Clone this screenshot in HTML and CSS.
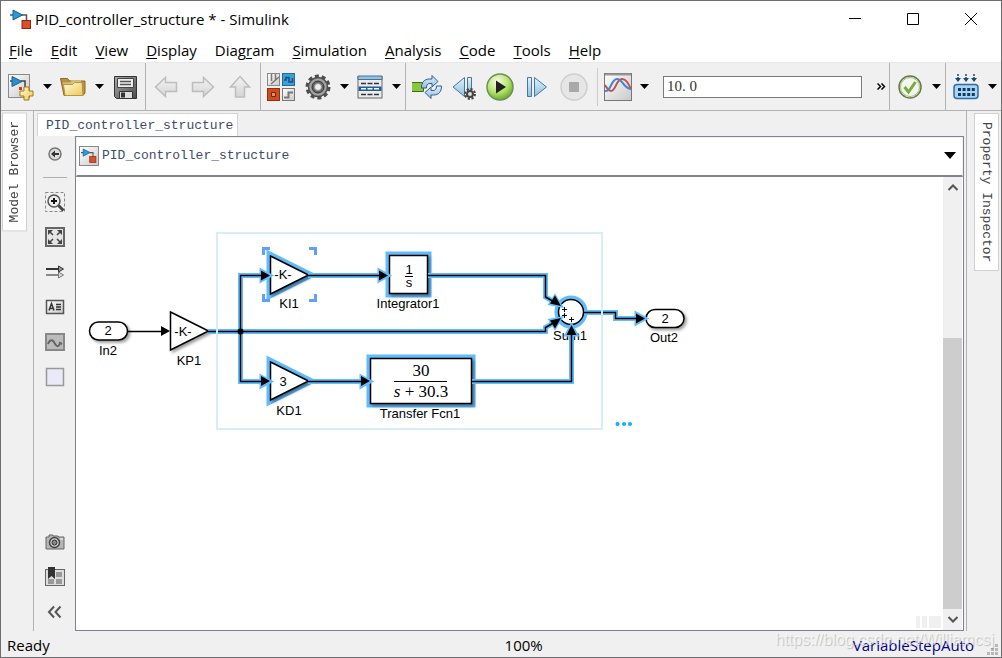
FILE: index.html
```
<!DOCTYPE html>
<html lang="en">
<head>
  <meta charset="UTF-8" />
  <meta name="viewport" content="width=device-width, initial-scale=1.0" />
  <title>PID_controller_structure * - Simulink</title>
  <link rel="stylesheet" href="styles.css">
</head>
<body>
  <!-- shared gradients and symbols -->
  <svg class="defs" width="0" height="0" aria-hidden="true">
    <defs>
      <linearGradient id="paper" x1="0" y1="0" x2="1" y2="1"><stop offset="0" stop-color="#fff"/><stop offset="1" stop-color="#c9c9c9"/></linearGradient>
      <linearGradient id="blue" x1="0" y1="0" x2="0" y2="1"><stop offset="0" stop-color="#e4f1fb"/><stop offset="1" stop-color="#8fbfe0"/></linearGradient>
      <linearGradient id="gold" x1="0" y1="0" x2="1" y2="1"><stop offset="0" stop-color="#fffbe0"/><stop offset="1" stop-color="#ecc94e"/></linearGradient>
      <linearGradient id="metal" x1="0" y1="0" x2="1" y2="1"><stop offset="0" stop-color="#aaa"/><stop offset="1" stop-color="#4c4c4c"/></linearGradient>
      <linearGradient id="pale" x1="0" y1="0" x2="0" y2="1"><stop offset="0" stop-color="#f4f4f4"/><stop offset="1" stop-color="#d4d4d4"/></linearGradient>
      <radialGradient id="green" cx="0.4" cy="0.3" r="0.7"><stop offset="0" stop-color="#f7fde9"/><stop offset="0.6" stop-color="#b5e36c"/><stop offset="1" stop-color="#69ae2c"/></radialGradient>
      <symbol id="model" viewBox="0 0 22 20">
        <path d="M0 6h3M12 6h4.500v7" fill="none" stroke="#555" stroke-width="1.500"/>
        <path d="M3 1l9.500 5L3 11z" fill="#2b9bd8" stroke="#17608f"/>
        <rect x="12" y="11.500" width="8.500" height="8" fill="#d9502a" stroke="#8f2a12"/>
      </symbol>
      <symbol id="caret" viewBox="0 0 9 5"><path d="M0 0h9L4.500 5z"/></symbol>
    </defs>
  </svg>

  <div class="window">
    <header class="titlebar">
      <svg class="app-icon" width="22" height="20"><use href="#model"/></svg>
      <h1>PID_controller_structure * - Simulink</h1>
      <div class="window-buttons">
        <button aria-label="Minimize"><svg width="12" height="12"><path d="M0 5.500h12" stroke="#000"/></svg></button>
        <button aria-label="Maximize"><svg width="12" height="12"><path d="M.5.5h11v11H.5z" fill="none" stroke="#000"/></svg></button>
        <button aria-label="Close"><svg width="12" height="12"><path d="M0 0l12 12M12 0L0 12" stroke="#000"/></svg></button>
      </div>
    </header>

    <nav class="menubar">
      <button><u>F</u>ile</button>
      <button><u>E</u>dit</button>
      <button><u>V</u>iew</button>
      <button><u>D</u>isplay</button>
      <button>Diag<u>r</u>am</button>
      <button><u>S</u>imulation</button>
      <button><u>A</u>nalysis</button>
      <button><u>C</u>ode</button>
      <button><u>T</u>ools</button>
      <button><u>H</u>elp</button>
    </nav>

    <div class="toolbar">
      <div class="group">
        <div class="split">
          <button aria-label="New model"><svg width="28" height="28">
            <rect x="1.500" y="1.500" width="21" height="23" fill="url(#paper)" stroke="#8a8a8a"/>
            <path d="M3 8h3M14 8h4v6" fill="none" stroke="#444" stroke-width="1.500"/>
            <path d="M5 3.500l10 5-10 5z" fill="#2b8fd0" stroke="#17608f"/>
            <path d="M12 14h3v3h-3z" fill="#c8401c"/>
            <path d="M17 14h5v4h4v5h-4v4h-5v-4h-4v-5h4z" fill="url(#gold)" stroke="#a87a12"/>
          </svg></button>
          <button class="drop" aria-label="New options"><svg width="9" height="5"><use href="#caret"/></svg></button>
        </div>
        <div class="split">
          <button aria-label="Open"><svg width="28" height="28">
            <path d="M1.500 5.500h7l2 2.500h15.500v12l-2 2.500H5z" fill="#b98f4c" stroke="#8f6a25"/>
            <path d="M4 9.500h7l2-2h9V20H6z" fill="#e0bf74"/>
            <path d="M4.500 11.500h9l2-2h7.500l1 13H6z" fill="url(#gold)" stroke="#b5954a"/>
          </svg></button>
          <button class="drop" aria-label="Open options"><svg width="9" height="5"><use href="#caret"/></svg></button>
        </div>
        <button aria-label="Save"><svg width="28" height="28">
          <path d="M3.500 3.500h22v22h-20l-2-2z" fill="url(#metal)" stroke="#333"/>
          <path d="M6.500 5.500h16v9h-16z" fill="#eee" stroke="#444"/>
          <path d="M9 8.500h11M9 11.500h11" stroke="#555" stroke-width="1.500"/>
          <path d="M8.500 18.500h13v7h-13z" fill="#ddd" stroke="#333"/>
          <path d="M10 19.500h4v5h-4z" fill="#333"/>
        </svg></button>
      </div>

      <div class="group">
        <button aria-label="Back" disabled><svg width="28" height="28"><path d="M3.500 14l10-9.500v5h11v9h-11v5z" fill="url(#pale)" stroke="#bdbdbd" stroke-width="1.500"/></svg></button>
        <button aria-label="Forward" disabled><svg width="28" height="28"><path d="M24.500 14l-10-9.500v5h-11v9h11v5z" fill="url(#pale)" stroke="#bdbdbd" stroke-width="1.500"/></svg></button>
        <button aria-label="Up to parent" disabled><svg width="28" height="28"><path d="M14 3.500l9.500 10.500h-5v10h-9V14h-5z" fill="url(#pale)" stroke="#bdbdbd" stroke-width="1.500"/></svg></button>
      </div>

      <div class="group">
        <button aria-label="Library browser"><svg width="28" height="28">
          <rect x=".5" y=".5" width="12" height="12" fill="url(#paper)" stroke="#888"/>
          <path d="M4.500 1v7M4 11l8-7M8.500 1v6" stroke="#777" stroke-width="1.500"/>
          <rect x="15.500" y=".5" width="12" height="12" fill="#3c9fdb" stroke="#1d6ca3"/>
          <path d="M17 7h2V4.500h3V9h3.500V5" fill="none" stroke="#164f7c" stroke-width="1.500"/>
          <rect x=".5" y="15.500" width="12" height="12" fill="#cf4a1d" stroke="#93300e"/>
          <path d="M4.500 19.500h4v4h-4z" fill="#ec8c62" stroke="#7a1f07"/>
          <rect x="15.500" y="15.500" width="12" height="12" fill="url(#paper)" stroke="#777"/>
          <path d="M17 24.500h4.500v-5H26" fill="none" stroke="#777" stroke-width="2"/>
        </svg></button>
        <div class="split">
          <button aria-label="Model configuration"><svg width="28" height="28">
            <circle cx="14" cy="14" r="11" fill="none" stroke="#4d4d4d" stroke-width="3" stroke-dasharray="4 2.910"/>
            <circle cx="14" cy="14" r="9.500" fill="#a2a2a2" stroke="#4d4d4d" stroke-width="1.500"/>
            <circle cx="14" cy="14" r="6" fill="#666" stroke="#333"/>
            <circle cx="14" cy="14" r="3.500" fill="#eee" stroke="#999"/>
          </svg></button>
          <button class="drop" aria-label="Configuration options"><svg width="9" height="5"><use href="#caret"/></svg></button>
        </div>
        <div class="split">
          <button aria-label="Model explorer"><svg width="28" height="28">
            <rect x="2" y="3.500" width="24" height="21.500" fill="#ececec" stroke="#666"/>
            <path d="M2 3h24v3.500H2z" fill="#8fc3e8" stroke="#4c708e"/>
            <path d="M2.500 13.500h23v4.500h-23z" fill="#1f5f9c"/>
            <path d="M5 10.500h18M5 21.500h18" stroke="#333" stroke-width="1.500" stroke-dasharray="5 1.500"/>
            <path d="M5 15.750h18" stroke="#fff" stroke-width="1.500" stroke-dasharray="5 1.500"/>
          </svg></button>
          <button class="drop" aria-label="Explorer options"><svg width="9" height="5"><use href="#caret"/></svg></button>
        </div>
      </div>

      <div class="group grow">
        <button aria-label="Fast restart"><svg width="30" height="28">
          <path d="M-.5 9.500h12v9H-.5z" fill="#8cc63f" stroke="#3f6c17"/>
          <path d="M9.500 15c0-6 3-9 8-9h2.500V2.500l6 6-6 5.500v-3.500h-2c-2.500 0-3.500 1.500-3.500 4.500z" fill="url(#blue)" stroke="#2b5c8c"/>
          <path d="M29.500 13c0 6-3 9-8 9H19v3.500l-6-6 6-5.500v3.500h2c2.500 0 3.500-1.500 3.500-4.500z" fill="url(#blue)" stroke="#2b5c8c"/>
        </svg></button>
        <button aria-label="Step back"><svg width="28" height="28">
          <path d="M15.500 4.500v19L4 14z" fill="url(#blue)" stroke="#45789f"/>
          <path d="M18.500 4.500h4v16h-4z" fill="url(#blue)" stroke="#45789f"/>
          <circle cx="21" cy="21" r="5" fill="none" stroke="#444" stroke-width="2" stroke-dasharray="2.200 1.700"/>
          <circle cx="21" cy="21" r="3" fill="#ddd" stroke="#444" stroke-width="2"/>
        </svg></button>
        <button aria-label="Run"><svg width="28" height="28">
          <circle cx="14" cy="14" r="13" fill="url(#green)" stroke="#6f8f57" stroke-width="1.500"/>
          <path d="M10 7.500v13l10-6.500z" fill="#222"/>
        </svg></button>
        <button aria-label="Step forward"><svg width="28" height="28">
          <path d="M4.500 4.500h4v19h-4z" fill="url(#blue)" stroke="#45789f"/>
          <path d="M11.500 4.500v19l12-9.500z" fill="url(#blue)" stroke="#45789f"/>
        </svg></button>
        <button aria-label="Stop" disabled><svg width="28" height="28">
          <circle cx="14" cy="14" r="13" fill="#e6e6e6" stroke="#cfcfcf" stroke-width="1.500"/>
          <path d="M9 9h10v10H9z" fill="#a9a9a9"/>
        </svg></button>
        <span class="thin-line"></span>
        <div class="split">
          <button aria-label="Simulation data inspector"><svg width="28" height="28">
            <rect x=".5" y=".5" width="27" height="27" fill="url(#paper)" stroke="#777"/>
            <path d="M1 1.500h26" stroke="#999" stroke-width="2"/>
            <path d="M1 12c2 3 3 6 6 6 5 0 5-12 11-12 4 0 6 4 9 10" fill="none" stroke="#cc4b4b" stroke-width="2"/>
            <path d="M1 18c6 1 6-12 12-12 6 0 6 9 14 10" fill="none" stroke="#3f87cc" stroke-width="2"/>
          </svg></button>
          <button class="drop" aria-label="Inspector options"><svg width="9" height="5"><use href="#caret"/></svg></button>
        </div>
        <input class="stop-time" type="text" value="10. 0" aria-label="Simulation stop time">
        <button class="drop" aria-label="More tools"><svg width="9" height="7"><path d="M.5.5L3.500 3.500l-3 3M4.500.5l3 3-3 3" fill="none" stroke="#000" stroke-width="1.500"/></svg></button>
      </div>

      <div class="group">
        <div class="split">
          <button aria-label="Model advisor"><svg width="28" height="28">
            <circle cx="14" cy="14" r="11" fill="#f3f6ee" stroke="#68784f" stroke-width="1.500"/>
            <circle cx="14" cy="14" r="9.500" fill="none" stroke="#9ec070"/>
            <path d="M8.500 14l4 5 7-10" fill="none" stroke="#79ab3c" stroke-width="3"/>
          </svg></button>
          <button class="drop" aria-label="Advisor options"><svg width="9" height="5"><use href="#caret"/></svg></button>
        </div>
      </div>

      <div class="group">
        <div class="split">
          <button aria-label="Build model"><svg width="28" height="28">
            <path d="M6 1v6M14 1v6M22 1v6" stroke="#18486f" stroke-width="1.500" stroke-dasharray="2 1"/>
            <path d="M3 5h6L6 9zM11 5h6l-3 4zM19 5h6l-3 4z" fill="#18486f"/>
            <rect x="2" y="11.500" width="24" height="14" rx="3" fill="#a8d5f5" stroke="#2b6da3" stroke-width="1.500"/>
            <path d="M6 16.500h17M6 21.500h17" stroke="#143a5c" stroke-width="3" stroke-dasharray="3 1.600"/>
          </svg></button>
          <button class="drop" aria-label="Build options"><svg width="9" height="5"><use href="#caret"/></svg></button>
        </div>
      </div>
    </div>

    <main class="workspace">
      <aside class="dock dock-left"><button class="dock-tab flip">Model Browser</button></aside>

      <section class="editor">
        <div class="tabs"><button class="tab">PID_controller_structure</button></div>
        <div class="editor-body">
          <div class="palette">
            <button aria-label="Hide browser"><svg width="20" height="20"><circle cx="10" cy="10" r="6" fill="#ddd" stroke="#777" stroke-width="1.500"/><path d="M6 10l4-3.500v2.500h4v2h-4v2.500z" fill="#333"/></svg></button>
            <hr>
            <button aria-label="Zoom"><svg width="20" height="20"><path d="M.5.5h19v19H.5z" fill="none" stroke="#888" stroke-dasharray="3 2"/><circle cx="9" cy="9" r="6" fill="#eee" stroke="#555" stroke-width="1.500"/><path d="M6 9h6M9 6v6" stroke="#111" stroke-width="2"/><path d="M13.500 13.500l5 5" stroke="#444" stroke-width="3"/></svg></button>
            <button aria-label="Fit to view"><svg width="20" height="20"><rect x="1" y="1" width="18" height="18" fill="#e4e4e4" stroke="#666" stroke-width="2"/><path d="M3 3h5L3 8zM17 3h-5l5 5zM3 17h5l-5-5zM17 17h-5l5-5z" fill="#444"/><path d="M4 4l4 4M16 4l-4 4M4 16l4-4M16 16l-4-4" stroke="#444" stroke-width="1.500"/></svg></button>
            <button aria-label="Sample time display"><svg width="20" height="20"><path d="M1 7h13" stroke="#333" stroke-width="2"/><path d="M13.500 4l5 3-5 3z" fill="#999" stroke="#333"/><path d="M1 13h13" stroke="#888" stroke-width="2"/><path d="M13.500 10l5 3-5 3z" fill="#ddd" stroke="#777"/></svg></button>
            <button aria-label="Annotation"><svg width="20" height="20"><rect x="1.500" y="3.500" width="17" height="13" fill="url(#paper)" stroke="#555" stroke-width="1.500"/><path d="M4 13.500l2.500-7 2.500 7M4.500 11.500h4M11 7.500h5M11 10h5M11 12.500h5" fill="none" stroke="#333" stroke-width="1.500"/></svg></button>
            <button aria-label="Image"><svg width="20" height="20"><rect x="1" y="2" width="18" height="16" fill="#bbb" stroke="#888" stroke-width="2"/><path d="M3 12c2-5 5-5 7 0 2 3 4 3 5-1l2 1" fill="none" stroke="#666" stroke-width="2"/></svg></button>
            <button aria-label="Area"><svg width="20" height="20"><rect x="1.500" y="1.500" width="17" height="17" fill="#e9e9f8" stroke="#999" stroke-width="1.500"/></svg></button>
            <span class="spacer"></span>
            <button aria-label="Screenshot"><svg width="20" height="20"><path d="M1 5h3V3h4v1h5l1 1h5v12H1z" fill="#b5b5b5" stroke="#666"/><circle cx="9.500" cy="10.500" r="5" fill="#ccc" stroke="#444" stroke-width="1.500"/><circle cx="9.500" cy="10.500" r="2.500" fill="#888" stroke="#333"/><path d="M15 7h3" stroke="#fff"/></svg></button>
            <button aria-label="Viewmarks"><svg width="20" height="20"><rect x=".5" y="2.500" width="19" height="16" fill="#ddd" stroke="#666"/><path d="M11 5h6v5h-6zM11 12h6v5h-6zM3 12h6v5H3z" fill="#999"/><path d="M3 0h7v12l-3.500-3L3 12z" fill="#333"/></svg></button>
            <button aria-label="Collapse palette"><svg width="20" height="20"><path d="M9 4.500L4 10l5 5.500M15.500 4.500l-5 5.500 5 5.500" fill="none" stroke="#555" stroke-width="2"/></svg></button>
          </div>

          <div class="view">
            <div class="breadcrumb">
              <span class="crumb-icon"><svg width="16" height="15"><use href="#model"/></svg></span>
              <a href="#">PID_controller_structure</a>
              <button class="history" aria-label="Path history"><svg width="12" height="7" viewBox="0 0 12 7"><path d="M0 0h12L6 7z"/></svg></button>
            </div>
            <div class="canvas-row">
              <div class="canvas">
                <svg class="diagram" width="640" height="280" viewBox="76 177 640 280">
                  <defs>
                    <filter id="shadow" x="-30%" y="-30%" width="170%" height="170%"><feDropShadow dx="2" dy="2" stdDeviation="1.500" flood-color="#000" flood-opacity="0.4"/></filter>
                  </defs>
                  <text x="570" y="340">Sum1</text>

                  <!-- highlighted block outlines -->
                  <g class="halo">
                    <path d="M270.500 256v38l38-19zM270.500 362v38l38-19z"/>
                    <path d="M389.500 255.500h38v38h-38zM370.500 358.500h101v45h-101z"/>
                    <circle cx="571" cy="312" r="12.500"/>
                  </g>

                  <!-- blocks -->
                  <g class="block" filter="url(#shadow)">
                    <rect x="89.500" y="322" width="38" height="18" rx="9"/>
                    <path d="M170.500 312v38l38-19z"/>
                    <path d="M270.500 256v38l38-19z"/>
                    <path d="M270.500 362v38l38-19z"/>
                    <path d="M389.500 255.500h38v38h-38z"/>
                    <path d="M370.500 358.500h101v45h-101z"/>
                    <rect x="646" y="309.500" width="38" height="18" rx="9"/>
                  </g>
                  <circle class="block" cx="571" cy="312" r="12.500"/>

                  <!-- wires -->
                  <g class="wire-halo">
                    <path d="M208 331.500h337.500v-4l7-4M262 275.500h-21.500v106H262M308 275.500h73M428 275.500h117.500V297l7 4M308 381.500h54M472 381.500h99.500V334M584 312.500h31.500v6H638"/>
                  </g>
                  <g class="head-halo">
                    <path d="M261 270v11l10-5.500zM261 376v11l10-5.500zM379 270v11l10-5.500zM361 376v11l10-5.500zM636 313v11l10-5.500zM566 335h11l-5.500-10zM550 304l5-8 6 10zM550 320l5 8 6-10z"/>
                  </g>
                  <g class="wire">
                    <path d="M128 331.500h34M208 331.500h337.500v-4l7-4M262 275.500h-21.500v106H262M308 275.500h73M428 275.500h117.500V297l7 4M308 381.500h54M472 381.500h99.500V334M584 312.500h31.500v6H638"/>
                  </g>
                  <path d="M161 326v10l9-5zM261 270.500v10l9-5zM261 376v10l9-5zM379 270.500v10l9-5zM361 376v10l9-5zM636 313.500v10l9-5zM566.500 335h10l-5-10zM550 303.500l5-8 6 10.500zM550 320.500l5 8 6-10.500z"/>
                  <circle cx="240.500" cy="331.500" r="3"/>

                  <rect class="marquee" x="217" y="233" width="385" height="196"/>
                  <path class="handles" d="M263.500 255v-6.500h6.500M309 248.500h6.500v6.500M315.500 294v6.500H309M270 300.500h-6.500V294"/>

                  <text x="108" y="335">2</text>
                  <text x="108" y="355">In2</text>
                  <text x="183" y="336">-K-</text>
                  <text x="189" y="365">KP1</text>
                  <text x="283" y="279">-K-</text>
                  <text x="289" y="308">KI1</text>
                  <text x="283" y="386">3</text>
                  <text x="289" y="415">KD1</text>
                  <text x="409" y="274">1</text>
                  <path d="M405 276.500h8" stroke="#000"/>
                  <text x="409" y="287">s</text>
                  <text x="408" y="308">Integrator1</text>
                  <text class="math" x="421" y="376">30</text>
                  <path d="M394 381.500h53" stroke="#000"/>
                  <text class="math" x="421" y="397"><tspan font-style="italic">s</tspan> + 30.3</text>
                  <text x="420" y="418">Transfer Fcn1</text>
                  <path d="M562 309.500h5M564.500 307v5M562 315.500h5M564.500 313v5M569 319.500h5M571.500 317v5" stroke="#000"/>
                  <text x="665" y="323">2</text>
                  <text x="664" y="342">Out2</text>
                  <g fill="#0ab1f5"><circle cx="617.500" cy="424" r="2"/><circle cx="624" cy="424" r="2"/><circle cx="630" cy="424" r="2"/></g>
                </svg>
                <svg class="blocks-mark" width="26" height="12"><path d="M0 0h4v12H0zM6 0h5v12H6zM13 0h12v12H13z" fill="#f0f0f0"/></svg>
              </div>
              <div class="scrollbar">
                <button aria-label="Scroll up"><svg width="10" height="7"><path d="M.5 6L5 1.500 9.500 6" fill="none" stroke="#555" stroke-width="2"/></svg></button>
                <span class="track"><span class="thumb"></span></span>
                <button aria-label="Scroll down"><svg width="10" height="7"><path d="M.5 1L5 5.500 9.500 1" fill="none" stroke="#555" stroke-width="2"/></svg></button>
              </div>
            </div>
          </div>
        </div>
      </section>

      <aside class="dock dock-right"><button class="dock-tab">Property Inspector</button></aside>
    </main>

    <footer class="statusbar">
      <span>Ready</span>
      <span>100%</span>
      <a href="#">VariableStepAuto</a>
      <svg class="grip" width="11" height="11"><path d="M8 0h3v3H8zM4 4h3v3H4zM8 4h3v3H8zM0 8h3v3H0zM4 8h3v3H4zM8 8h3v3H8z" fill="#b8b8b8"/></svg>
    </footer>
    <span class="watermark">https://blog.csdn.net/Williamcsj</span>
  </div>
</body>
</html>
```
FILE: styles.css
```
* {
  box-sizing: border-box;
}

html, body {
  margin: 0;
  height: 100%;
  overflow: hidden;
  font-family: "Open Sans", "Noto Sans", sans-serif;
  font-size: 15px;
  color: #000;
}

button {
  padding: 0;
  border: none;
  background: none;
  font: inherit;
  color: inherit;
}

svg {
  display: block;
}

.defs {
  position: absolute;
}

.window {
  position: relative;
  display: flex;
  flex-direction: column;
  height: 100vh;
  border: 1px solid #6e6e70;
  background: #f0f0f0;
}

/* title and menus */
.titlebar {
  display: flex;
  align-items: center;
  height: 37px;
  padding: 0 1px 2px 9px;
  background: #fff;
}

.titlebar h1 {
  flex: 1;
  margin: 0 0 0 3px;
  font-size: 15px;
  font-weight: normal;
}

.window-buttons {
  display: flex;
}

.window-buttons button {
  display: flex;
  align-items: center;
  justify-content: center;
  width: 58px;
  height: 35px;
}

.menubar {
  display: flex;
  gap: 2px;
  height: 24px;
  background: #fff;
}

.menubar button {
  padding: 0 8px;
  line-height: 24px;
}

.menubar u {
  text-underline-offset: 2px;
}

/* toolbar */
.toolbar {
  display: flex;
  height: 49px;
  border-top: 1px solid #e8e8e8;
  border-bottom: 1px solid #b2b2b2;
}

.group {
  display: flex;
  align-items: center;
  gap: 4px;
  padding: 0 1px 0 6px;
}

.group + .group {
  border-left: 1px solid #b2b2b2;
}

.group > button {
  width: 28px;
  margin-right: 5px;
}

.grow {
  flex: 1;
  min-width: 0;
  padding-right: 0;
}

.split {
  display: flex;
  align-items: center;
  gap: 4px;
}

.group .drop {
  display: flex;
  align-items: center;
  justify-content: center;
  width: 16px;
  height: 28px;
  margin: 0;
}

.thin-line {
  width: 1px;
  height: 38px;
  margin-right: 2px;
  background: #ccc;
}

.stop-time {
  flex: 1;
  width: 0;
  height: 22px;
  margin: 0 7px;
  padding: 0 3px;
  border: 1px solid #7a7a7a;
  background: #fff;
  font-family: "Liberation Serif", serif;
  font-size: 15px;
  color: #333;
}

/* docks */
.workspace {
  display: flex;
  flex: 1;
  min-height: 0;
}

.dock {
  width: 33px;
  padding: 1px 1px 0;
}

.dock-left {
  border-right: 1px solid #b2b2b2;
}

.dock-right {
  width: 35px;
  padding: 2px 0 0 7px;
  border-left: 1px solid #b2b2b2;
}

.dock-tab {
  width: 25px;
  padding: 8px 0;
  border: 1px solid #d0d0d0;
  background: #fff;
  font-family: "Liberation Mono", monospace;
  font-size: 13px;
  color: #444;
  writing-mode: vertical-rl;
}

.flip {
  transform: rotate(180deg);
}

/* editor */
.editor {
  display: flex;
  flex: 1;
  flex-direction: column;
  min-width: 0;
  padding-right: 2px;
}

.tabs {
  padding: 2px 0 0 3px;
}

.tab {
  display: block;
  height: 23px;
  padding: 0 4px 0 8px;
  border: 1px solid #d4d4d4;
  border-bottom: none;
  background: #fff;
  font-family: "Liberation Mono", monospace;
  font-size: 13px;
  color: #3c4c66;
}

.editor-body {
  display: flex;
  flex: 1;
  min-height: 0;
}

.palette {
  display: flex;
  flex-direction: column;
  align-items: center;
  width: 41px;
  padding-bottom: 2px;
}

.palette button {
  display: flex;
  align-items: center;
  justify-content: center;
  width: 35px;
  height: 35px;
}

.palette hr {
  width: 24px;
  margin: 6px 0;
  border: none;
  border-top: 1px solid #b0b0b0;
}

.spacer {
  flex: 1;
}

.view {
  display: flex;
  flex: 1;
  flex-direction: column;
  min-width: 0;
  border: 1px solid #80838f;
}

.breadcrumb {
  display: flex;
  align-items: center;
  gap: 3px;
  height: 40px;
  padding: 0 6px 2px 2px;
  border: 1px solid #f0f0f0;
  border-bottom: 2px solid #80838f;
  background: #fff;
}

.crumb-icon {
  display: flex;
  align-items: center;
  justify-content: center;
  width: 20px;
  height: 20px;
  border: 1px solid #888;
  background: linear-gradient(135deg, #fff, #ccc);
}

.breadcrumb a {
  flex: 1;
  font-family: "Liberation Mono", monospace;
  font-size: 13px;
  color: #3c4c66;
  text-decoration: none;
}

.canvas-row {
  display: flex;
  flex: 1;
  min-height: 0;
}

.canvas {
  position: relative;
  flex: 1;
  min-width: 0;
  overflow: hidden;
  background: #fff;
}

.blocks-mark {
  position: absolute;
  right: 1px;
  bottom: 2px;
}

.scrollbar {
  display: flex;
  flex-direction: column;
  width: 20px;
  border-right: 1px solid #fff;
}

.scrollbar button {
  display: flex;
  align-items: center;
  justify-content: center;
  height: 21px;
}

.track {
  display: flex;
  flex: 1;
  flex-direction: column;
  justify-content: flex-end;
}

.thumb {
  height: 66%;
  background: #cdcdcd;
}

/* diagram */
.diagram {
  font-family: "Liberation Sans", sans-serif;
  font-size: 13px;
}

.diagram text {
  text-anchor: middle;
}

.diagram .math {
  font-family: "Liberation Serif", serif;
  font-size: 17px;
}

.block {
  fill: #fff;
  stroke: #000;
  stroke-width: 1.5;
}

.halo, .head-halo {
  fill: none;
  stroke: #62bcfc;
  stroke-width: 8;
}

.head-halo {
  fill: #62bcfc;
  stroke-width: 3;
}

.wire-halo {
  fill: none;
  stroke: #62bcfc;
  stroke-width: 5;
}

.wire {
  fill: none;
  stroke: #000;
  stroke-width: 1.5;
}

.marquee {
  fill: none;
  stroke: #d8edfc;
  stroke-width: 2;
}

.handles {
  fill: none;
  stroke: #629ffa;
  stroke-width: 3;
}

/* status bar */
.statusbar {
  display: grid;
  grid-template-columns: 15fr auto 13fr auto;
  align-items: center;
  height: 26px;
  padding: 1px 3px 0 6px;
}

.statusbar a {
  justify-self: end;
  color: #00008b;
  text-decoration: none;
}

.grip {
  align-self: end;
  margin: 0 0 2px 13px;
}

.watermark {
  position: absolute;
  right: 7px;
  bottom: 8px;
  font-family: "Liberation Sans", sans-serif;
  font-size: 16px;
  color: rgba(255, 255, 255, 0.6);
  text-shadow: 1px 1px 1px rgba(0, 0, 0, 0.2);
  pointer-events: none;
}
```
